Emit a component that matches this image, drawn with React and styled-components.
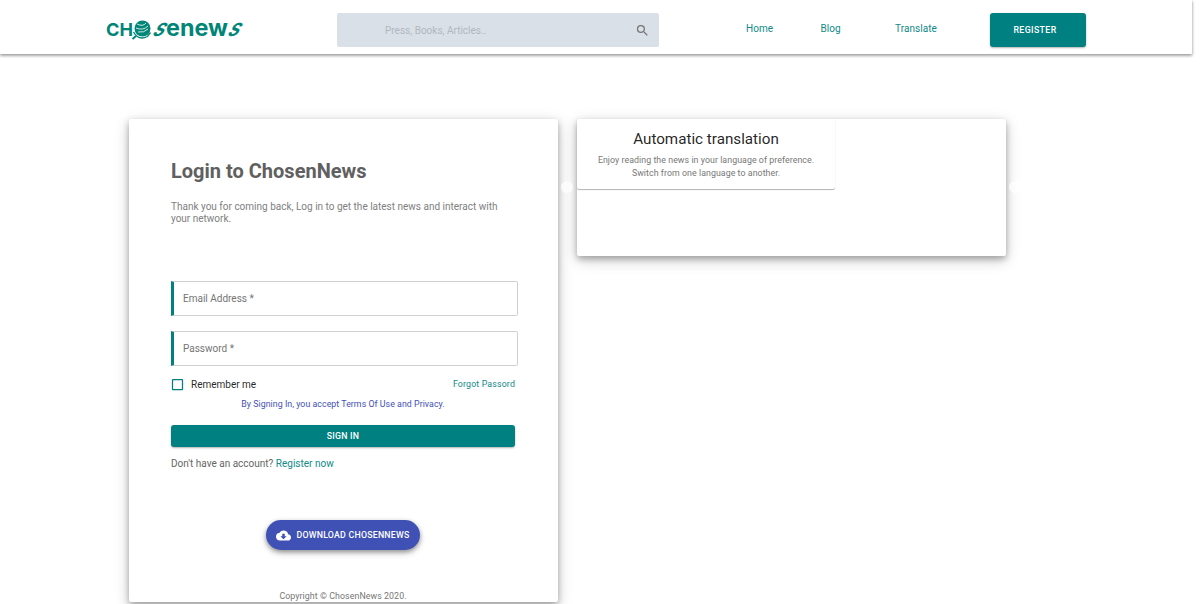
import React from 'react';
import styled, { createGlobalStyle } from 'styled-components';
import { MdSearch, MdCloudDownload, MdCheckBoxOutlineBlank } from 'react-icons/md';

const GlobalStyle = createGlobalStyle`
  * {
    box-sizing: border-box;
  }

  body {
    margin: 0;
    background: #fff;
    font-family: Roboto, "Liberation Sans", sans-serif;
    color: rgba(0, 0, 0, 0.87);
  }

  h1, h2, p {
    margin: 0;
    font-weight: 400;
  }
`;

const Page = styled.div`
  height: 604px;
  overflow: hidden;
`;

const Header = styled.header`
  display: flex;
  align-items: flex-start;
  width: 1192px;
  height: 54px;
  padding: 13px 0 0 105px;
  box-shadow: 0 1px 3px rgba(0, 0, 0, 0.3), 0 2px 3px rgba(0, 0, 0, 0.2);
`;

const LogoLink = styled.a`
  display: flex;
  width: 232px;

  svg {
    overflow: visible;
  }
`;

const SearchBox = styled.label`
  display: flex;
  align-items: center;
  justify-content: space-between;
  width: 322px;
  height: 34px;
  padding: 0 9px 0 48px;
  border-radius: 2px;
  background: #dae0e8;
  color: #757575;
`;

const SearchInput = styled.input`
  width: 200px;
  padding: 0;
  border: 0;
  outline: 0;
  background: transparent;
  font: 400 10px Roboto, sans-serif;

  &::placeholder {
    color: #b0b7bf;
    opacity: 1;
  }
`;

const Nav = styled.nav`
  display: flex;
  width: 331px;
  padding: 9px 0 0 87px;
`;

const NavLink = styled.a`
  width: 74.5px;
  color: #108a88;
  font-size: 10px;
  line-height: 13px;
  letter-spacing: 0.05px;
`;

const Button = styled.button`
  display: flex;
  flex-shrink: 0;
  align-items: center;
  justify-content: center;
  border: 0;
  border-radius: 3px;
  background: #008080;
  color: #fff;
  font: 500 8.75px Roboto, sans-serif;
  letter-spacing: 0.25px;
  text-transform: uppercase;
  box-shadow: 0 1px 2px rgba(0, 0, 0, 0.3);
`;

const RegisterButton = styled(Button)`
  width: 96px;
  height: 34px;
  padding-right: 12px;
  letter-spacing: 0.4px;
`;

const SignInButton = styled(Button)`
  width: 344px;
  height: 22px;
  margin-top: 15px;
`;

const DownloadButton = styled(Button)`
  width: 154px;
  height: 30px;
  gap: 5px;
  margin: 50px 0 0 95px;
  border-radius: 15px;
  background: #3f51b5;
  box-shadow: 0 2px 4px rgba(0, 0, 0, 0.3), 0 3px 7px rgba(0, 0, 0, 0.2);
`;

const Main = styled.main`
  display: flex;
  align-items: flex-start;
  gap: 19px;
  padding: 65px 0 0 129px;
`;

const Card = styled.section`
  width: 429px;
  height: ${props => props.$height}px;
  border-radius: 2px;
  background: #fff;
  box-shadow: 0 3px 6px rgba(0, 0, 0, 0.27), 0 4px 15px rgba(0, 0, 0, 0.2);
`;

const LoginCard = styled(Card)`
  display: flex;
  flex-direction: column;
  padding: 39px 40px 0 42px;
`;

const Title = styled.h1`
  color: #606060;
  font-size: 20px;
  font-weight: 700;
  line-height: 26px;
`;

const Intro = styled.p`
  margin-top: 17px;
  color: #808080;
  font-size: 10px;
  line-height: 12px;
  white-space: nowrap;
`;

const Fields = styled.div`
  display: grid;
  gap: 15px;
  margin-top: 56px;
`;

const Field = styled.label`
  display: flex;
  align-items: center;
  height: 35px;
  padding-left: 9px;
  border: 1px solid #d0d0d0;
  border-left: 3px solid #008080;
  border-radius: 0 2px 2px 0;
  color: #757575;
  font-size: 10px;
`;

const OptionsRow = styled.div`
  display: flex;
  flex-shrink: 0;
  align-items: center;
  justify-content: space-between;
  height: 17px;
  margin-top: 10px;
  padding-right: 3px;
`;

const Remember = styled.label`
  display: flex;
  align-items: center;
  gap: 6px;
  margin-left: -1px;
  font-size: 10px;

  svg {
    color: #008080;
  }
`;

const ForgotLink = styled.a`
  padding-bottom: 2px;
  color: #108a88;
  font-size: 8.8px;
  letter-spacing: 0.15px;
`;

const Terms = styled.p`
  margin-top: 6px;
  padding-right: 3px;
  color: #3f51b5;
  font-size: 8.8px;
  line-height: 11px;
  letter-spacing: 0.04px;
  text-align: center;
`;

const Account = styled.p`
  margin-top: 10px;
  color: #666;
  font-size: 10px;
  line-height: 13px;

  a {
    color: #108a88;
  }
`;

const Copyright = styled.p`
  margin-top: 40px;
  padding-right: 3px;
  color: #777;
  font-size: 8.8px;
  line-height: 13px;
  letter-spacing: 0.08px;
  text-align: center;
`;

const Carousel = styled(Card)`
  position: relative;
`;

const Slide = styled.article`
  width: 258px;
  height: 70px;
  padding-top: 10px;
  border-radius: 2px;
  text-align: center;
  box-shadow: 0 1px 1px rgba(0, 0, 0, 0.3);
`;

const SlideTitle = styled.h2`
  font-size: 15.2px;
  line-height: 20px;
`;

const SlideText = styled.p`
  margin-top: 5px;
  color: #777;
  font-size: 8.8px;
  line-height: 13px;
  letter-spacing: 0.06px;
`;

const Arrow = styled.span`
  position: absolute;
  top: 62px;
  left: ${props => props.$left}px;
  width: 12px;
  height: 12px;
  border-radius: 50%;
  background: rgba(255, 255, 255, 0.7);
`;

const LogoText = styled.text`
  font-family: Inter, sans-serif;
  font-weight: ${props => props.$weight || 700};
  fill: #008577;
`;

const Logo = () => (
  <svg width="142" height="32" viewBox="0 -5 142 32" role="img" aria-label="ChoseNews">
    <LogoText x="1" y="18" fontSize="18" textLength="27" lengthAdjust="spacingAndGlyphs">CH</LogoText>
    <circle cx="37.5" cy="10.5" r="8" fill="#008577" />
    <path d="M32 6q6 3 9-1M31 10q7 3 12-2M33 14q6 1 10-3" fill="none" stroke="#fff" strokeWidth="0.8" />
    <path d="M28.500 14q5 9 14 4.500l3-4" fill="none" stroke="#008577" strokeWidth="1.3" />
    <path d="m31 18-3.500 3" stroke="#008577" strokeWidth="2" />
    <g transform="translate(46 18) skewX(-32)">
      <LogoText $weight={600} fontSize="24" textLength="11" lengthAdjust="spacingAndGlyphs">s</LogoText>
    </g>
    <LogoText x="61" y="18" fontSize="23" textLength="62" lengthAdjust="spacingAndGlyphs">enew</LogoText>
    <g transform="translate(121 18) skewX(-32)">
      <LogoText $weight={600} fontSize="24" textLength="11" lengthAdjust="spacingAndGlyphs">s</LogoText>
    </g>
  </svg>
);

const fields = ['Email Address *', 'Password *'];

const App = () => (
  <Page>
    <GlobalStyle />
    <Header>
      <LogoLink>
        <Logo />
      </LogoLink>
      <SearchBox>
        <SearchInput placeholder="Press, Books, Articles.." />
        <MdSearch size={15} />
      </SearchBox>
      <Nav>
        <NavLink>Home</NavLink>
        <NavLink>Blog</NavLink>
        <NavLink>Translate</NavLink>
      </Nav>
      <RegisterButton>Register</RegisterButton>
    </Header>

    <Main>
      <LoginCard $height={483}>
        <Title>Login to ChosenNews</Title>
        <Intro>
          Thank you for coming back, Log in to get the latest news and interact with
          <br />
          your network.
        </Intro>
        <Fields>
          {fields.map(field => (
            <Field key={field}>{field}</Field>
          ))}
        </Fields>
        <OptionsRow>
          <Remember>
            <MdCheckBoxOutlineBlank size={15} />
            Remember me
          </Remember>
          <ForgotLink>Forgot Passord</ForgotLink>
        </OptionsRow>
        <Terms>By Signing In, you accept Terms Of Use and Privacy.</Terms>
        <SignInButton>Sign In</SignInButton>
        <Account>
          Don't have an account? <a>Register now</a>
        </Account>
        <DownloadButton>
          <MdCloudDownload size={15} />
          Download ChosenNews
        </DownloadButton>
        <Copyright>Copyright © ChosenNews 2020.</Copyright>
      </LoginCard>

      <Carousel $height={137}>
        <Slide>
          <SlideTitle>Automatic translation</SlideTitle>
          <SlideText>
            Enjoy reading the news in your language of preference.
            <br />
            Switch from one language to another.
          </SlideText>
        </Slide>
        <Arrow $left={-16} />
        <Arrow $left={432} />
      </Carousel>
    </Main>
  </Page>
);

export default App;
